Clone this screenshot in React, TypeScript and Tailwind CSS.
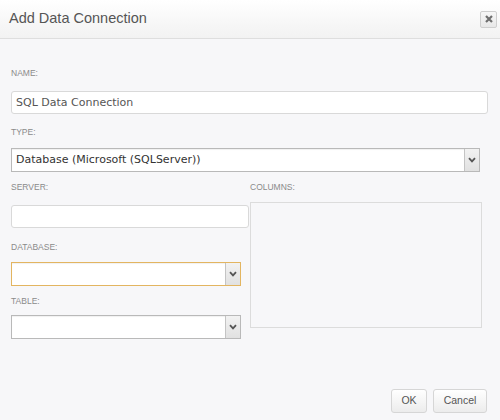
import React from "react";

const label = "block h-[10px] text-[8.5px] leading-[10px] uppercase text-[#8a8a8a] font-['Liberation_Sans',Arial,sans-serif]";

function Chevron() {
  return (
    <svg width="8" height="6" viewBox="0 0 8 6" fill="none">
      <path d="M1 1.2 L4 4.4 L7 1.2" stroke="#555" strokeWidth="1.8" />
    </svg>
  );
}

function Select({ value, focused, className }: { value?: string; focused?: boolean; className: string }) {
  return (
    <div
      className={`flex h-[24px] items-stretch border bg-white shadow-[inset_0_1px_1px_rgba(0,0,0,0.06)] ${
        focused ? "border-[#e3b560]" : "border-[#b9b9b9]"
      } ${className}`}
    >
      <span className="flex-1 truncate pl-[4px] text-[11px] leading-[22px] text-[#333] font-['DejaVu_Sans',Verdana,sans-serif]">
        {value}
      </span>
      <span className="flex w-[15px] items-center justify-center border-l border-[#c4c4c4] bg-gradient-to-b from-[#f2f2f2] to-[#e1e1e1]">
        <Chevron />
      </span>
    </div>
  );
}

export default function App() {
  return (
    <div className="flex h-[420px] w-[500px] flex-col bg-[#f7f7f9] font-['Liberation_Sans',Arial,sans-serif]">
      <div className="flex h-[39px] items-center justify-between border-b border-[#dedede] bg-gradient-to-b from-white to-[#f2f2f2] pl-[9px] pr-[3px]">
        <span className="text-[14.5px] text-[#555]">Add Data Connection</span>
        <button className="flex h-[17px] w-[17px] items-center justify-center rounded-[2px] border border-[#cfcfcf] bg-gradient-to-b from-[#f7f7f7] to-[#e8e8e8]">
          <svg width="8" height="8" viewBox="0 0 8 8">
            <path d="M1 1 L7 7 M7 1 L1 7" stroke="#6f6f6f" strokeWidth="2.2" />
          </svg>
        </button>
      </div>

      <div className="flex flex-1 flex-col px-[11px] pt-[29px]">
        <span className={label}>Name:</span>
        <div className="mt-[13px] h-[23px] w-[477px] rounded-[3px] border border-[#d9d9d9] bg-white pl-[4px] text-[11px] leading-[21px] text-[#555] font-['DejaVu_Sans',Verdana,sans-serif]">
          SQL Data Connection
        </div>

        <span className={`${label} mt-[13px]`}>Type:</span>
        <Select value="Database (Microsoft (SQLServer))" className="mt-[11px] w-[469px]" />

        <div className="flex">
          <div className="flex w-[239px] flex-col">
            <span className={`${label} mt-[10px]`}>Server:</span>
            <div className="mt-[13px] h-[23px] w-[238px] rounded-[3px] border border-[#d9d9d9] bg-white" />

            <span className={`${label} mt-[14px]`}>Database:</span>
            <Select focused className="mt-[10px] w-[230px]" />

            <span className={`${label} mt-[10px]`}>Table:</span>
            <Select className="mt-[9px] w-[230px]" />
          </div>

          <div className="flex flex-col">
            <span className={`${label} mt-[10px]`}>Columns:</span>
            <div className="mt-[10px] h-[126px] w-[232px] border border-[#dcdcdc] bg-[#f7f7f9]" />
          </div>
        </div>
      </div>

      <div className="flex justify-end gap-[6px] pb-[7px] pr-[13px]">
        <button className="h-[24px] w-[36px] rounded-[3px] border border-[#d6d6d6] bg-gradient-to-b from-white to-[#ececec] text-[10.5px] text-[#555]">
          OK
        </button>
        <button className="h-[24px] w-[54px] rounded-[3px] border border-[#d6d6d6] bg-gradient-to-b from-white to-[#ececec] text-[10.5px] text-[#555]">
          Cancel
        </button>
      </div>
    </div>
  );
}
